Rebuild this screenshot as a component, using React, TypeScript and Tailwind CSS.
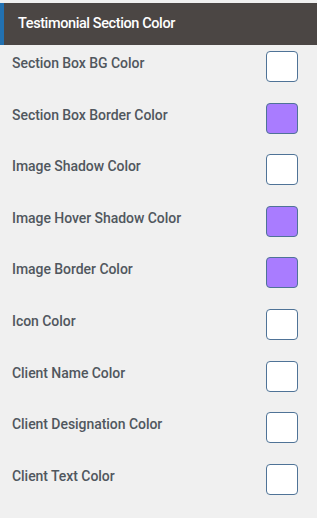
import React from "react";

const rows: { label: string; color: string }[] = [
  { label: "Section Box BG Color", color: "#ffffff" },
  { label: "Section Box Border Color", color: "#a97cff" },
  { label: "Image Shadow Color", color: "#ffffff" },
  { label: "Image Hover Shadow Color", color: "#a97cff" },
  { label: "Image Border Color", color: "#a97cff" },
  { label: "Icon Color", color: "#ffffff" },
  { label: "Client Name Color", color: "#ffffff" },
  { label: "Client Designation Color", color: "#ffffff" },
  { label: "Client Text Color", color: "#ffffff" },
];

export default function App() {
  return (
    <div
      className="w-[317px] h-[518px] bg-[#f0f0f0] pt-[3px]"
      style={{ fontFamily: "Roboto, 'Liberation Sans', sans-serif" }}
    >
      <div className="flex h-[42px] items-center bg-[#4b4644] border-l-4 border-[#2271b1] pl-[14px]">
        <span className="text-[14.5px] font-medium text-white tracking-[-0.4px]">
          Testimonial Section Color
        </span>
      </div>
      <div className="flex flex-col">
        {rows.map((r) => (
          <div key={r.label} className="flex h-[51.6px] items-start justify-between pl-[12px] pr-[19px] pt-[6px]">
            <span className="mt-[2px] text-[14px] leading-5 font-medium text-[#50575e] tracking-[-0.05px]">
              {r.label}
            </span>
            <div
              className="w-[32px] h-[31px] rounded-[4px] border border-[#4f7397]"
              style={{ backgroundColor: r.color }}
            />
          </div>
        ))}
      </div>
    </div>
  );
}
